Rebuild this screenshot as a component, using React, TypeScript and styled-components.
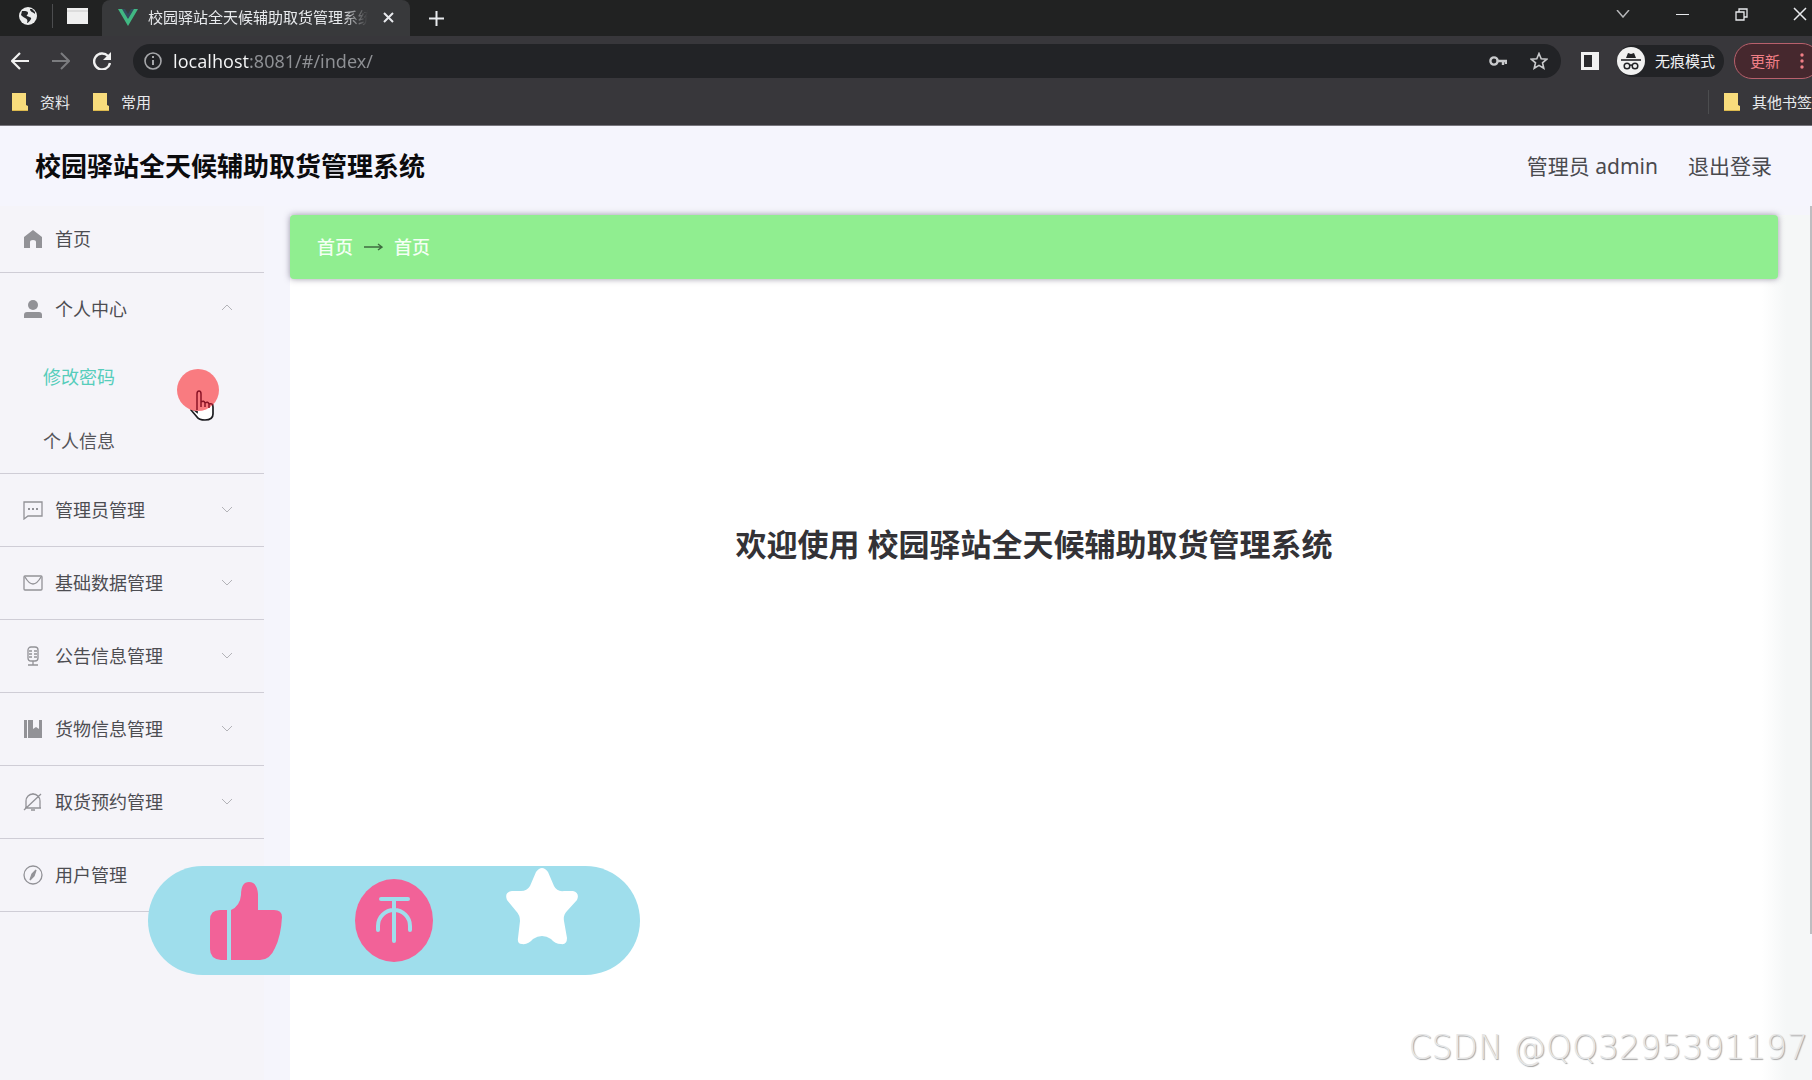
import React from "react";
import styled, { createGlobalStyle } from "styled-components";

const GlobalStyle = createGlobalStyle`
  * { box-sizing: border-box; }
  body {
    margin: 0;
    overflow: hidden;
    background: #f5f5fc;
    font-family: "Noto Sans", "Noto Sans CJK SC", sans-serif;
  }
  button, input { font-family: inherit; }
  a { color: inherit; text-decoration: none; }
  h1, h2, ul { margin: 0; padding: 0; }
  svg { display: block; flex: none; }
`;

const Screen = styled.div`
  position: relative;
  display: flex;
  flex-direction: column;
  height: 100vh;
  overflow: hidden;
`;

/* ---------- browser frame ---------- */

const Browser = styled.header`
  flex: none;
  color: #e8eaed;
  background: #38373b;
  border-bottom: 1px solid #77757c;
  overflow: hidden;
`;

const IconButton = styled.button<{ $w?: number }>`
  display: flex;
  flex: none;
  align-items: center;
  justify-content: center;
  width: ${(p) => p.$w ?? 24}px;
  height: 24px;
  padding: 0;
  border: 0;
  color: inherit;
  background: none;
`;

const TabStrip = styled.div`
  display: flex;
  align-items: center;
  height: 36px;
  background: #212222;
`;

const PinnedTabs = styled.div`
  display: flex;
  align-items: center;
  gap: 12px;
  width: 102px;
  padding: 0 0 4px 16px;
`;

const Separator = styled.span`
  width: 1px;
  height: 24px;
  background: #4c4d4f;
`;

const Tab = styled.div`
  display: flex;
  align-items: center;
  width: 308px;
  height: 36px;
  padding: 0 10px 2px 16px;
  border-radius: 8px 8px 0 0;
  background: #38393b;
`;

const TabTitle = styled.span`
  flex: 1;
  margin: 0 8px 0 10px;
  overflow: hidden;
  white-space: nowrap;
  font-size: 15px;
  line-height: 24px;
  mask-image: linear-gradient(to right, #000 88%, transparent);
`;

const NewTab = styled(IconButton)`
  margin-left: 14px;
`;

const WindowControls = styled.div`
  display: flex;
  gap: 35px;
  margin-left: auto;
  padding-bottom: 8px;
`;

const Toolbar = styled.div`
  display: flex;
  align-items: center;
  height: 50px;
  padding-left: 8px;
`;

const NavButtons = styled.div`
  display: flex;
  gap: 17px;
  margin-right: 19px;
`;

const AddressBar = styled.label`
  display: flex;
  flex: 1;
  align-items: center;
  height: 34px;
  padding: 0 10px 0 8px;
  border-radius: 17px;
  background: #222326;
`;

const AddressInput = styled.input`
  flex: 1;
  min-width: 0;
  height: 28px;
  margin-left: 8px;
  padding: 0;
  border: 0;
  outline: 0;
  font-size: 18px;
  line-height: 28px;
  color: transparent;
  background: linear-gradient(to right, #f4f5f6 77px, #8f9195 77px);
  background-clip: text;
  -webkit-background-clip: text;
`;

const AddressActions = styled.div`
  display: flex;
  gap: 17px;
`;

const PanelButton = styled(IconButton)`
  margin: 0 15px 0 17px;
`;

const Incognito = styled.button`
  display: flex;
  align-items: center;
  gap: 10px;
  height: 32px;
  padding: 0 9px 0 0;
  border: 0;
  border-radius: 16px;
  color: #f1f2f4;
  background: #222326;
  font-size: 15px;
  line-height: 24px;
`;

const UpdateButton = styled.button`
  display: flex;
  flex: none;
  align-items: center;
  justify-content: space-between;
  width: 86px;
  height: 36px;
  margin: 0 -8px 0 10px;
  padding: 0 15px 0 15px;
  border: 1px solid #b8606c;
  border-radius: 18px;
  color: #f07f86;
  background: #46282e;
  font-size: 15px;
  line-height: 24px;
`;

const Bookmarks = styled.nav`
  display: flex;
  align-items: center;
  height: 39px;
  padding: 0 0 8px 12px;
  gap: 23px;
`;

const Bookmark = styled.a`
  display: flex;
  align-items: center;
  gap: 11px;
  font-size: 15px;
  line-height: 24px;
  white-space: nowrap;
`;

const OtherBookmarks = styled.div`
  display: flex;
  align-items: center;
  gap: 15px;
  margin-left: auto;
`;

/* ---------- page ---------- */

const PageHeader = styled.header`
  display: flex;
  flex: none;
  align-items: center;
  justify-content: space-between;
  height: 80px;
  padding: 0 40px 0 35px;
  background: #f5f5fd;
`;

const SiteTitle = styled.h1`
  font-size: 26px;
  line-height: 40px;
  font-weight: 700;
  color: #0b0b0d;
`;

const Account = styled.div`
  display: flex;
  gap: 30px;
  font-size: 21px;
  line-height: 32px;
  color: #4a4a4e;
`;

const Body = styled.div`
  display: flex;
  flex: 1;
  min-height: 0;
`;

const Sidebar = styled.aside`
  flex: none;
  width: 264px;
  background: #f5f4f9;
`;

const Menu = styled.ul`
  list-style: none;
`;

const MenuGroup = styled.li`
  border-bottom: 1px solid #cfcdd6;
`;

const MenuItem = styled.a<{ $first?: boolean }>`
  display: flex;
  align-items: center;
  height: ${(p) => (p.$first ? 66 : 72)}px;
  padding: 0 32px 0 23px;
  color: #4d4d52;
  font-size: 18px;
  line-height: 28px;
`;

const MenuLabel = styled.span`
  flex: 1;
  margin-left: 12px;
`;

const SubItem = styled.a<{ $active?: boolean }>`
  display: flex;
  align-items: center;
  height: 64px;
  padding-left: 43px;
  color: ${(p) => (p.$active ? "#56cdbb" : "#55555a")};
  font-size: 18px;
  line-height: 28px;
`;

const Main = styled.main`
  display: flex;
  flex: 1;
  flex-direction: column;
  margin-left: 26px;
  padding: 9px 32px 0 0;
  background: linear-gradient(to left, #f5f7f7 24px, #fff 48px);
  box-shadow: inset 0 9px 0 #f5f5fc;
`;

const Breadcrumb = styled.nav`
  display: flex;
  flex: none;
  align-items: center;
  gap: 11px;
  height: 64px;
  padding: 0 27px;
  border-radius: 4px;
  background: #90ee90;
  box-shadow: 0 0 6px rgba(60, 50, 80, 0.5);
  color: #f4fff4;
  font-size: 18px;
  line-height: 28px;
  font-weight: 500;
`;

const Welcome = styled.h2`
  margin-top: 241px;
  text-align: center;
  font-size: 31px;
  line-height: 48px;
  font-weight: 700;
  color: #333236;
`;

const ScrollThumb = styled.div`
  flex: none;
  width: 2px;
  height: 728px;
  background: #bdbdc0;
`;

/* ---------- overlays ---------- */

const Pointer = styled.div`
  position: absolute;
  left: 177px;
  top: 369px;
`;

const Reactions = styled.div`
  position: absolute;
  left: 148px;
  top: 866px;
  display: flex;
  align-items: center;
  gap: 73px;
  height: 109px;
  padding: 0 62px;
  border-radius: 55px;
  background: #9fdeec;
`;

const Reaction = styled.button<{ $top?: boolean }>`
  align-self: ${(p) => (p.$top ? "flex-start" : "center")};
  padding: 0;
  border: 0;
  background: none;
`;

const Watermark = styled.div`
  position: absolute;
  right: 4px;
  bottom: 12px;
  font-family: "DejaVu Sans", sans-serif;
  font-weight: 200;
  font-size: 33px;
  line-height: 40px;
  color: #e6e6e6;
  text-shadow: 1px 1px 1px #a4a4a4;
`;

/* ---------- icons ---------- */

const Folder = () => (
  <svg width="17" height="18" viewBox="0 0 17 18">
    <path d="M0 0h14v12l2 1v5H0z" fill="#f8dc7c" />
    <path d="M0 17h16v1H0z" fill="#dcb94e" />
  </svg>
);

const Caret = ({ up }: { up?: boolean }) => (
  <svg width="10" height="10" viewBox="0 0 10 10" fill="none" stroke="#b3b3b8">
    <path d={up ? "M0 6l5-5 5 5" : "M0 2l5 5 5-5"} />
  </svg>
);

const iconShapes: Record<string, React.ReactNode> = {
  home: <path d="M10 1L1 8v11h6v-6q0-2 3-2t3 2v6h6V8z" fill="#929297" stroke="none" />,
  user: (
    <g fill="#929297" stroke="none">
      <circle cx="10" cy="6" r="5" />
      <path d="M1 19v-3q0-3 3-3h12q3 0 3 3v3z" />
    </g>
  ),
  chat: (
    <>
      <path d="M1 2h18v14H5l-4 3z" />
      <path d="M5 9h2M9 9h2M13 9h2" strokeWidth="2" />
    </>
  ),
  mail: (
    <>
      <rect x="1" y="3" width="18" height="14" rx="1" />
      <path d="M2 4q8 14 16 0" />
    </>
  ),
  mic: (
    <>
      <rect x="5" y="1" width="10" height="14" rx="3" />
      <path d="M6 5h3M11 5h3M6 8h3M11 8h3M6 11h3M11 11h3M10 15v4M5 19h10" />
    </>
  ),
  book: (
    <g fill="#929297" stroke="none">
      <path d="M1 1h3v18H1zM5 1h5v9l3-2 3 2V1h3v18H5z" />
    </g>
  ),
  bell: (
    <>
      <path d="M3 16V9a7 7 0 0 1 14 0v7M2 16h16M8 18h4M10 1v1M1 18L18 2" />
    </>
  ),
  compass: (
    <>
      <circle cx="10" cy="10" r="9" />
      <path d="M13 5l-2 6-4 4 2-6z" fill="#929297" />
    </>
  ),
};

const MenuIcon = ({ name }: { name: string }) => (
  <svg width="20" height="20" viewBox="0 0 20 20" fill="none" stroke="#929297" strokeWidth="1.3">
    {iconShapes[name]}
  </svg>
);

const menu = [
  { icon: "home", label: "首页" },
  { icon: "user", label: "个人中心", children: ["修改密码", "个人信息"] },
  { icon: "chat", label: "管理员管理", caret: true },
  { icon: "mail", label: "基础数据管理", caret: true },
  { icon: "mic", label: "公告信息管理", caret: true },
  { icon: "book", label: "货物信息管理", caret: true },
  { icon: "bell", label: "取货预约管理", caret: true },
  { icon: "compass", label: "用户管理", caret: true },
];

function BrowserFrame() {
  return (
    <Browser>
      <TabStrip>
        <PinnedTabs>
          <IconButton aria-label="网页">
            <svg width="18" height="18" viewBox="0 0 18 18">
              <circle cx="9" cy="9" r="9" fill="#eceded" />
              <path d="M3 4c3 0 6 0 6 2s-2 2-1 3 5 1 4 3-3 4-4 4c1-3 0-4-2-5S3 9 2 8zM11 2c0 3 3 3 5 5V5l-3-3z" fill="#26282a" />
            </svg>
          </IconButton>
          <Separator />
          <IconButton aria-label="窗口">
            <svg width="21" height="16" viewBox="0 0 21 16">
              <rect width="21" height="16" fill="#efefef" />
              <path d="M0 3h21" stroke="#c9c9c9" />
            </svg>
          </IconButton>
        </PinnedTabs>
        <Tab>
          <svg width="20" height="17" viewBox="0 0 20 17">
            <path d="M0 0h5l5 9 5-9h5L10 17z" fill="#41b883" />
            <path d="M4 0h3l3 5 3-5h3l-6 10z" fill="#35495e" />
          </svg>
          <TabTitle>校园驿站全天候辅助取货管理系统</TabTitle>
          <IconButton aria-label="关闭标签页">
            <svg width="11" height="11" viewBox="0 0 11 11" stroke="currentColor" strokeWidth="2">
              <path d="M1 1l9 9M10 1l-9 9" />
            </svg>
          </IconButton>
        </Tab>
        <NewTab aria-label="新标签页">
          <svg width="15" height="15" viewBox="0 0 15 15" stroke="currentColor" strokeWidth="2">
            <path d="M7.500 0v15M0 7.500h15" />
          </svg>
        </NewTab>
        <WindowControls>
          <IconButton aria-label="搜索标签页">
            <svg width="14" height="8" viewBox="0 0 14 8" fill="none" stroke="#b5b6b8" strokeWidth="1.500">
              <path d="M1 0l6 7 6-7" />
            </svg>
          </IconButton>
          <IconButton aria-label="最小化">
            <svg width="13" height="3" viewBox="0 0 13 3"><path d="M0 1.500h13" stroke="currentColor" /></svg>
          </IconButton>
          <IconButton aria-label="还原">
            <svg width="13" height="13" viewBox="0 0 13 13" fill="none" stroke="currentColor" strokeWidth="1.300">
              <path d="M1 4h8v8H1zM4 4V1h8v8H9" />
            </svg>
          </IconButton>
          <IconButton aria-label="关闭">
            <svg width="14" height="14" viewBox="0 0 14 14" stroke="currentColor" strokeWidth="1.500">
              <path d="M1 1l12 12M13 1L1 13" />
            </svg>
          </IconButton>
        </WindowControls>
      </TabStrip>
      <Toolbar>
        <NavButtons>
          <IconButton aria-label="后退">
            <svg width="18" height="18" viewBox="0 0 18 18" fill="none" stroke="#f1f1f1" strokeWidth="2.200">
              <path d="M18 9H2M9 1L1 9l8 8" />
            </svg>
          </IconButton>
          <IconButton aria-label="前进">
            <svg width="18" height="18" viewBox="0 0 18 18" fill="none" stroke="#7b7c7f" strokeWidth="2">
              <path d="M0 9h16M9 1l8 8-8 8" />
            </svg>
          </IconButton>
          <IconButton aria-label="刷新">
            <svg width="18" height="18" viewBox="0 0 18 18" fill="none" stroke="#f1f1f1" strokeWidth="2.400">
              <path d="M15 4a8 8 0 1 0 2 7" />
              <path d="M18 0v8h-8z" fill="#f1f1f1" stroke="none" />
            </svg>
          </IconButton>
        </NavButtons>
        <AddressBar>
          <IconButton as="span">
            <svg width="18" height="18" viewBox="0 0 18 18" fill="none" stroke="#a6a7aa" strokeWidth="1.600">
              <circle cx="9" cy="9" r="8" />
              <path d="M9 8v5M9 4v2" strokeWidth="2" />
            </svg>
          </IconButton>
          <AddressInput aria-label="地址栏" defaultValue="localhost:8081/#/index/" spellCheck={false} />
          <AddressActions>
            <IconButton aria-label="密码">
              <svg width="18" height="10" viewBox="0 0 18 10" fill="none" stroke="#c9cacc" strokeWidth="2.400">
                <circle cx="5" cy="5" r="3.600" />
                <path d="M8 5h10M14 5v4M17 5v3" />
              </svg>
            </IconButton>
            <IconButton aria-label="收藏">
              <svg width="18" height="18" viewBox="0 0 18 18" fill="none" stroke="#c9cacc" strokeWidth="1.600">
                <path d="M9 1.500l2.200 5.200 5.500.5-4.200 3.600 1.300 5.500L9 13.400l-4.800 2.900 1.300-5.500L1.300 7.200l5.500-.5z" />
              </svg>
            </IconButton>
          </AddressActions>
        </AddressBar>
        <PanelButton aria-label="侧边栏">
          <svg width="18" height="18" viewBox="0 0 18 18">
            <rect width="18" height="18" fill="#f1f1f1" />
            <rect x="3" y="3" width="8" height="12" fill="#2a2a2d" />
          </svg>
        </PanelButton>
        <Incognito>
          <svg width="28" height="28" viewBox="0 0 28 28">
            <circle cx="14" cy="14" r="14" fill="#f1f1f1" />
            <path d="M9 11l2-5 3 1 3-1 2 5z" fill="#222326" />
            <path d="M4 13h20" stroke="#222326" strokeWidth="1.600" />
            <g fill="none" stroke="#222326" strokeWidth="1.500">
              <circle cx="10" cy="19" r="2.800" />
              <circle cx="18" cy="19" r="2.800" />
              <path d="M12.800 18.500q1.200-1 2.400 0" />
            </g>
          </svg>
          无痕模式
        </Incognito>
        <UpdateButton>
          更新
          <svg width="4" height="18" viewBox="0 0 4 18" fill="#f07f86">
            <circle cx="2" cy="3" r="1.700" />
            <circle cx="2" cy="9" r="1.700" />
            <circle cx="2" cy="15" r="1.700" />
          </svg>
        </UpdateButton>
      </Toolbar>
      <Bookmarks>
        <Bookmark href="#"><Folder />资料</Bookmark>
        <Bookmark href="#"><Folder />常用</Bookmark>
        <OtherBookmarks>
          <Separator />
          <Bookmark href="#"><Folder />其他书签</Bookmark>
        </OtherBookmarks>
      </Bookmarks>
    </Browser>
  );
}

export default function App() {
  return (
    <Screen>
      <GlobalStyle />
      <BrowserFrame />
      <PageHeader>
        <SiteTitle>校园驿站全天候辅助取货管理系统</SiteTitle>
        <Account>
          <span>管理员 admin</span>
          <a href="#logout">退出登录</a>
        </Account>
      </PageHeader>
      <Body>
        <Sidebar>
          <Menu>
            {menu.map((m, i) => (
              <MenuGroup key={m.label}>
                <MenuItem href="#" $first={i === 0}>
                  <MenuIcon name={m.icon} />
                  <MenuLabel>{m.label}</MenuLabel>
                  {(m.caret || m.children) && <Caret up={!!m.children} />}
                </MenuItem>
                {m.children?.map((c, n) => (
                  <SubItem href="#" key={c} $active={n === 0}>{c}</SubItem>
                ))}
              </MenuGroup>
            ))}
          </Menu>
        </Sidebar>
        <Main>
          <Breadcrumb>
            <a href="#">首页</a>
            <svg width="19" height="10" viewBox="0 0 19 10" fill="none" stroke="#3f6b40" strokeWidth="1.400">
              <path d="M0 5h17M14 2l4 3-4 3" />
            </svg>
            <a href="#">首页</a>
          </Breadcrumb>
          <Welcome>欢迎使用 校园驿站全天候辅助取货管理系统</Welcome>
        </Main>
        <ScrollThumb />
      </Body>

      <Pointer>
        <svg width="44" height="56" viewBox="0 0 44 56">
          <path
            d="M20 41V25q0-3 2-3t2 3v8q3-2 4 1 3-2 4 1 4-1 4 3v7q0 6-8 6-6 0-8-3l-6-7q1-2 6 2z"
            fill="#fff" stroke="#1c1c20" strokeWidth="1.700"
          />
          <circle cx="21" cy="21" r="21" fill="#f97b80" />
          <g fill="none" stroke="#8a1426" strokeWidth="1.500">
            <path d="M20 41V25q0-3 2-3t2 3v8M24 33v5M24 33q3-2 4 1v4M28 34q3-2 4 1v4M32 35q3-1 4 1" />
          </g>
        </svg>
      </Pointer>

      <Reactions>
        <Reaction aria-label="点赞">
          <svg width="72" height="78" viewBox="0 0 72 78" fill="#f26298">
            <path d="M10 28h7v50h-6Q0 77 0 67V38Q0 28 10 28z" />
            <path d="M21 28q9-4 10-15Q31 0 39 0t9 12v16h16q8 0 8 7-1 19-7 31-5 12-15 12H21z" />
          </svg>
        </Reaction>
        <Reaction aria-label="投币">
          <svg width="78" height="83" viewBox="0 0 78 83">
            <ellipse cx="39" cy="41.500" rx="39" ry="41.500" fill="#f26298" />
            <path
              d="M26 20h27M39 20v42M23 51v-4a16 16 0 0 1 32 0v4"
              fill="none" stroke="#9fdeec" strokeWidth="4" strokeLinecap="round"
            />
          </svg>
        </Reaction>
        <Reaction aria-label="收藏" $top>
          <svg width="72" height="79" viewBox="0 0 72 79" fill="#fff">
            <path d="M30 6Q36-2 42 6l6 14q3 6 10 5l9 0q7 2 4 9L61 45q-4 4-3 10l3 17q0 7-6 6-6 0-10-5-9-6-18 0-5 6-11 5-5 0-4-6l2-17q0-6-4-10L1 34q-3-8 5-9l9 0q6 0 9-5z" />
          </svg>
        </Reaction>
      </Reactions>

      <Watermark>CSDN @QQ3295391197</Watermark>
    </Screen>
  );
}
